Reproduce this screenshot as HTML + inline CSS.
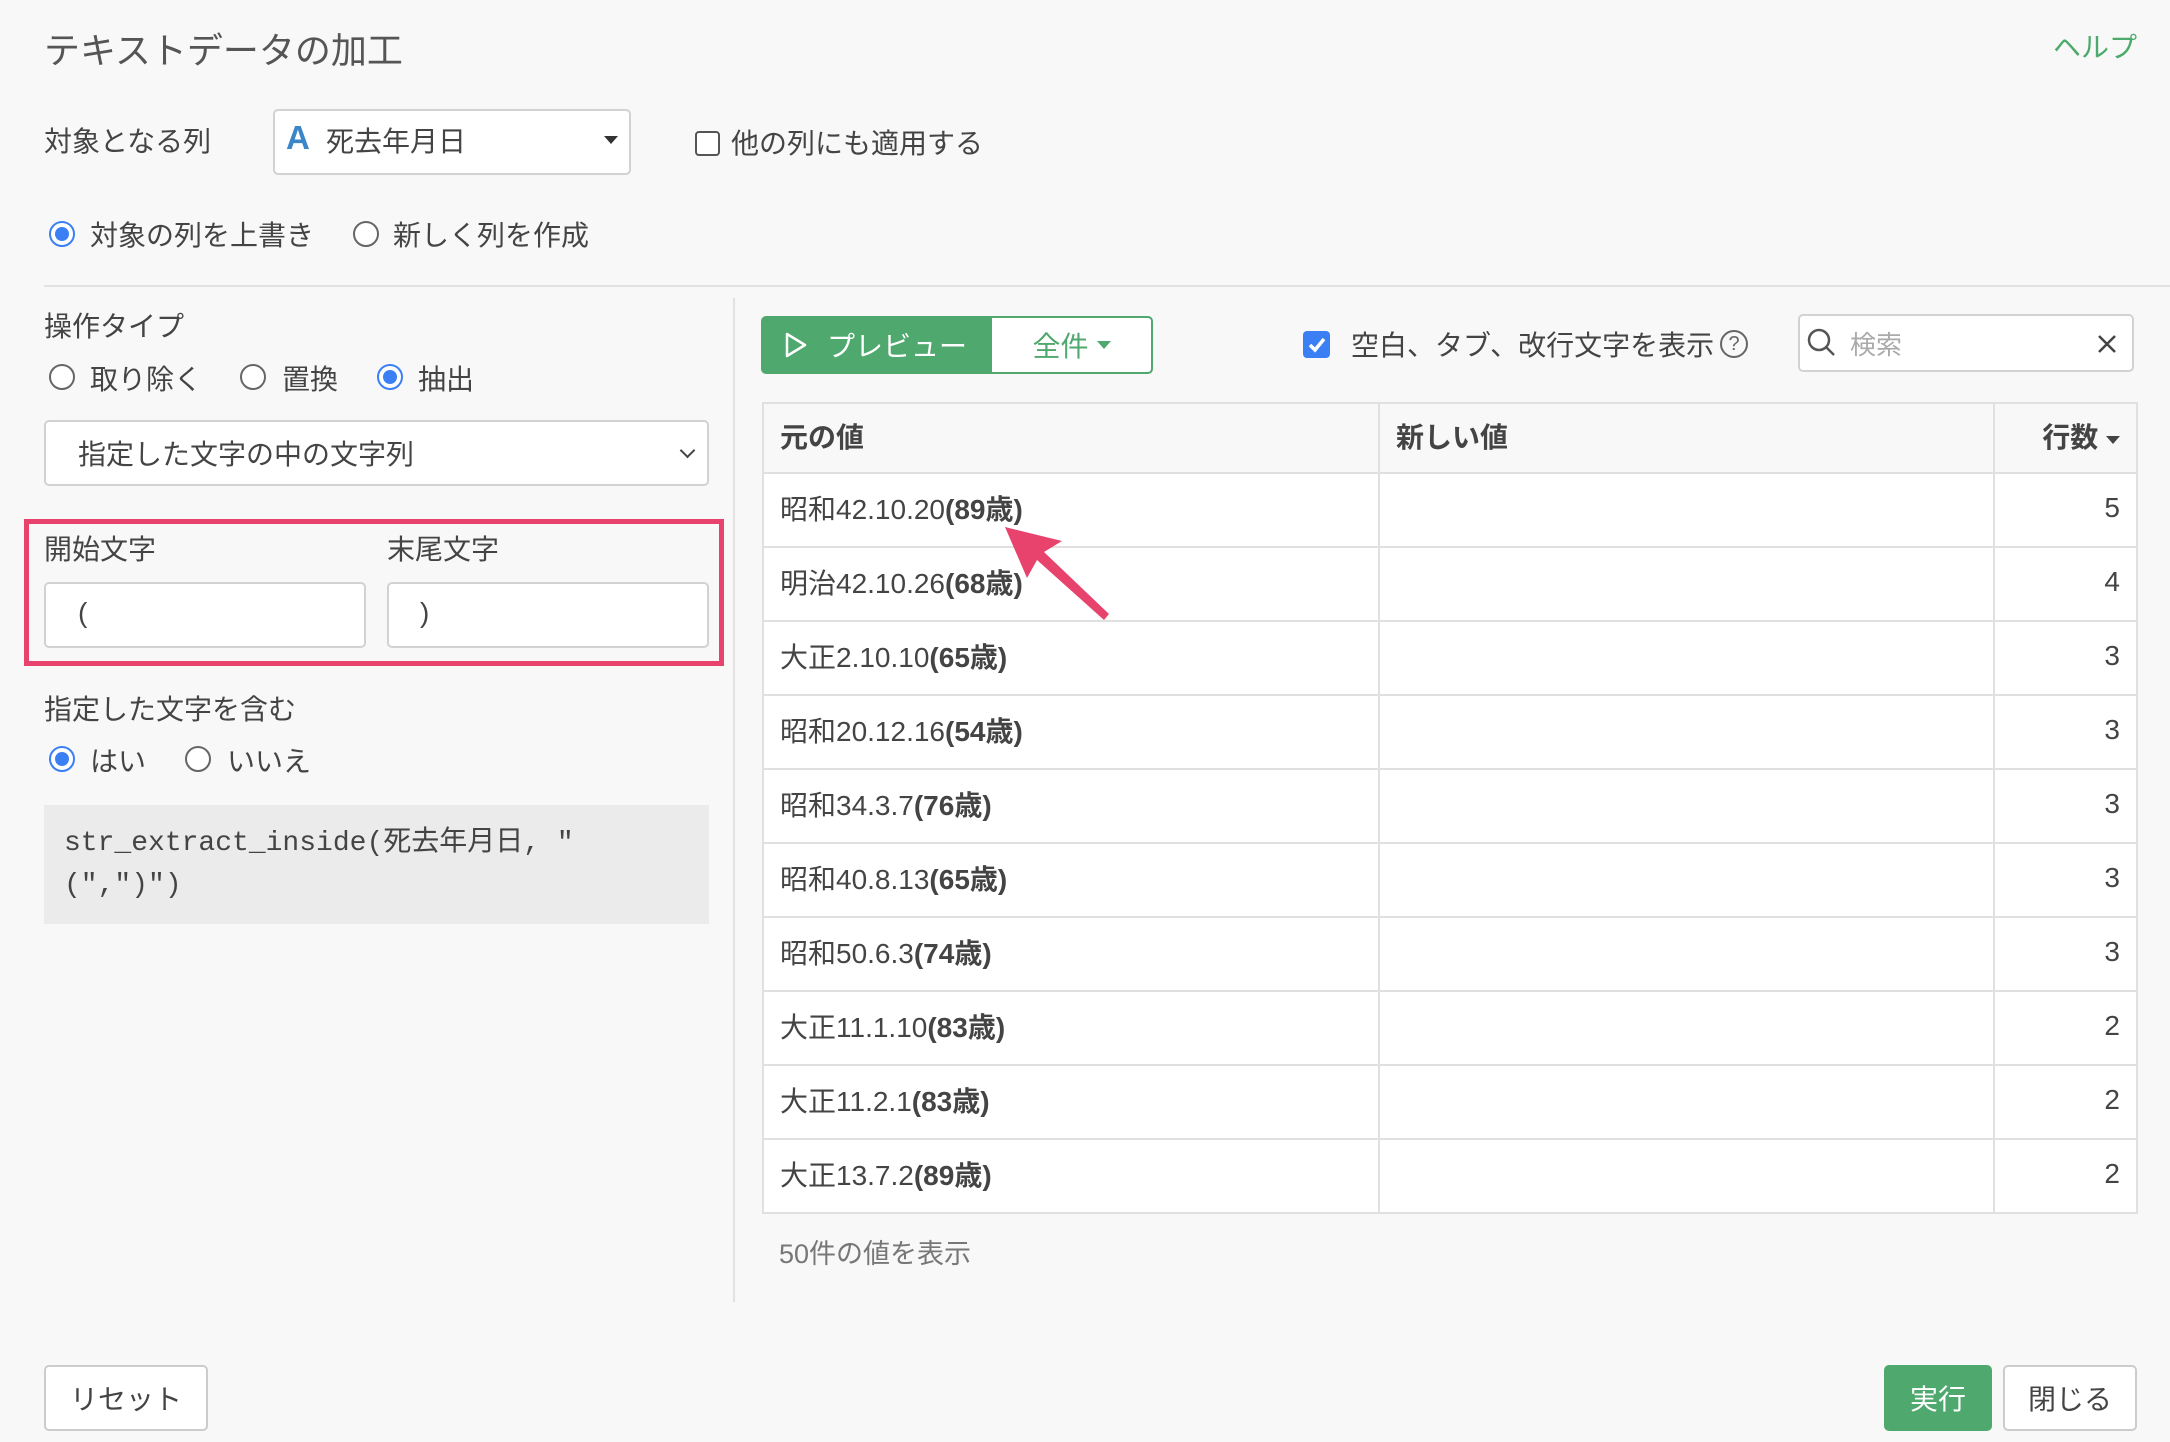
<!DOCTYPE html>
<html><head><meta charset="utf-8"><style>
*{box-sizing:border-box;margin:0;padding:0}
body{width:2170px;height:1442px;background:#f8f8f8;font-family:"Liberation Sans","Noto Sans CJK JP",sans-serif;color:#444;position:relative;overflow:hidden;font-size:28px}
.a{position:absolute;white-space:nowrap}
.radio{position:absolute;width:26px;height:26px;border:2px solid #666;border-radius:50%;background:#fff}
.radio.on{border:2px solid #3b7ff5}
.radio.on::after{content:"";position:absolute;left:4px;top:4px;width:14px;height:14px;border-radius:50%;background:#3b7ff5}
.box{position:absolute;background:#fff;border:2px solid #d2d2d2;border-radius:5px}
table{position:absolute;left:762px;top:402px;width:1376px;border-collapse:collapse;background:#fff}
td,th{border:2px solid #e0e0e0;height:74px;font-size:28px;padding:0 16px;text-align:left;color:#444;padding-bottom:4px}
th{background:#f8f8f8;height:70px}
td.n,th.n{text-align:right}
b{color:#444}
.btn{position:absolute;border-radius:5px;font-size:28px;display:flex;align-items:center;justify-content:center}
</style></head><body>
<div class="a" style="left:44px;top:22px;font-size:36px;color:#555">テキストデータの加工</div>
<div class="a" style="left:2053px;top:26px;font-size:28px;color:#4caa6c">ヘルプ</div>

<div class="a" style="left:44px;top:120px">対象となる列</div>
<div class="box" style="left:273px;top:109px;width:358px;height:66px"></div>
<div class="a" style="left:286px;top:119px;font-size:33px;color:#3b86c9;font-weight:bold">A</div>
<div class="a" style="left:326px;top:120px">死去年月日</div>
<div class="a" style="left:604px;top:136px;width:0;height:0;border-left:7px solid transparent;border-right:7px solid transparent;border-top:8px solid #333"></div>
<div class="a" style="left:695px;top:131px;width:25px;height:25px;border:2px solid #555;border-radius:4px;background:#fff"></div>
<div class="a" style="left:731px;top:122px">他の列にも適用する</div>

<div class="radio on" style="left:49px;top:221px"></div>
<div class="a" style="left:90px;top:214px">対象の列を上書き</div>
<div class="radio" style="left:353px;top:221px"></div>
<div class="a" style="left:393px;top:214px">新しく列を作成</div>
<div class="a" style="left:44px;top:285px;width:2126px;height:2px;background:#e2e2e2"></div>
<div class="a" style="left:733px;top:298px;width:2px;height:1004px;background:#e2e2e2"></div>

<div class="a" style="left:44px;top:305px">操作タイプ</div>
<div class="radio" style="left:49px;top:364px"></div>
<div class="a" style="left:90px;top:358px">取り除く</div>
<div class="radio" style="left:240px;top:364px"></div>
<div class="a" style="left:282px;top:358px">置換</div>
<div class="radio on" style="left:377px;top:364px"></div>
<div class="a" style="left:418px;top:358px">抽出</div>

<div class="box" style="left:44px;top:420px;width:665px;height:66px"></div>
<div class="a" style="left:78px;top:433px">指定した文字の中の文字列</div>
<div class="a" style="left:682px;top:445px;width:11px;height:11px;border-right:2px solid #444;border-bottom:2px solid #444;transform:rotate(45deg)"></div>

<div class="a" style="left:24px;top:519px;width:700px;height:147px;border:5px solid #e8436c"></div>
<div class="a" style="left:44px;top:528px">開始文字</div>
<div class="a" style="left:387px;top:528px">末尾文字</div>
<div class="box" style="left:44px;top:582px;width:322px;height:66px"></div>
<div class="box" style="left:387px;top:582px;width:322px;height:66px"></div>
<div class="a" style="left:78px;top:597px">(</div>
<div class="a" style="left:420px;top:597px">)</div>

<div class="a" style="left:44px;top:688px">指定した文字を含む</div>
<div class="radio on" style="left:49px;top:746px"></div>
<div class="a" style="left:90px;top:740px">はい</div>
<div class="radio" style="left:185px;top:746px"></div>
<div class="a" style="left:227px;top:740px">いいえ</div>

<div class="a" style="left:44px;top:805px;width:665px;height:119px;background:#ebebeb"></div>
<div class="a" style="left:64px;top:823px;font-family:'Liberation Mono','Noto Sans CJK JP',monospace;font-size:28px;line-height:42px;color:#444">str_extract_inside(死去年月日, "<br>(",")")</div>

<div class="btn" style="left:761px;top:316px;width:232px;height:58px;background:#4fa86e;color:#fff;border-radius:5px 0 0 5px;justify-content:flex-start;padding-left:24px">
<svg width="22" height="26" viewBox="0 0 22 26" style="margin-right:20px"><path d="M2 2 L20 13 L2 24 Z" fill="none" stroke="#fff" stroke-width="2.5" stroke-linejoin="round"/></svg>プレビュー</div>
<div class="btn" style="left:992px;top:316px;width:161px;height:58px;background:#fff;border:2px solid #4fa86e;border-left:none;border-radius:0 5px 5px 0;color:#4fa86e">全件<span style="display:inline-block;margin-left:8px;border-left:7px solid transparent;border-right:7px solid transparent;border-top:8px solid #4fa86e"></span></div>

<div class="a" style="left:1303px;top:331px;width:27px;height:27px;background:#3b7ff5;border-radius:4px"></div>
<svg class="a" style="left:1306px;top:334px" width="22" height="22" viewBox="0 0 22 22"><path d="M4 11 L9 16 L18 5" fill="none" stroke="#fff" stroke-width="3.5"/></svg>
<div class="a" style="left:1351px;top:324px">空白、タブ、改行文字を表示</div>
<div class="a" style="left:1720px;top:330px;width:28px;height:28px;border:2px solid #666;border-radius:50%;font-size:20px;text-align:center;line-height:24px;color:#666">?</div>

<div class="box" style="left:1798px;top:314px;width:336px;height:58px"></div>
<svg class="a" style="left:1806px;top:327px" width="32" height="32" viewBox="0 0 32 32"><circle cx="13" cy="13" r="10" fill="none" stroke="#555" stroke-width="2.5"/><path d="M20 20 L28 28" stroke="#555" stroke-width="2.5"/></svg>
<div class="a" style="left:1850px;top:325px;color:#aaa;font-size:26px">検索</div>
<svg class="a" style="left:2096px;top:333px" width="22" height="22" viewBox="0 0 22 22"><path d="M3 3 L19 19 M19 3 L3 19" stroke="#444" stroke-width="2.5"/></svg>

<table>
<tr><th style="width:616px">元の値</th><th style="width:615px">新しい値</th><th class="n">行数 <span style="display:inline-block;border-left:7px solid transparent;border-right:7px solid transparent;border-top:8px solid #444;vertical-align:middle"></span></th></tr>
<tr><td>昭和42.10.20<b>(89歳)</b></td><td></td><td class="n">5</td></tr>
<tr><td>明治42.10.26<b>(68歳)</b></td><td></td><td class="n">4</td></tr>
<tr><td>大正2.10.10<b>(65歳)</b></td><td></td><td class="n">3</td></tr>
<tr><td>昭和20.12.16<b>(54歳)</b></td><td></td><td class="n">3</td></tr>
<tr><td>昭和34.3.7<b>(76歳)</b></td><td></td><td class="n">3</td></tr>
<tr><td>昭和40.8.13<b>(65歳)</b></td><td></td><td class="n">3</td></tr>
<tr><td>昭和50.6.3<b>(74歳)</b></td><td></td><td class="n">3</td></tr>
<tr><td>大正11.1.10<b>(83歳)</b></td><td></td><td class="n">2</td></tr>
<tr><td>大正11.2.1<b>(83歳)</b></td><td></td><td class="n">2</td></tr>
<tr><td>大正13.7.2<b>(89歳)</b></td><td></td><td class="n">2</td></tr>
</table>

<svg class="a" style="left:0;top:0" width="2170" height="1442"><path d="M1005 527 L1062 541 L1044 552 L1109 614 L1104 620 L1037 560 L1027 578 Z" fill="#e8436c"/></svg>

<div class="a" style="left:779px;top:1232px;color:#777;font-size:27px">50件の値を表示</div>

<div class="btn" style="left:44px;top:1365px;width:164px;height:66px;background:#fff;border:2px solid #ccc;color:#444">リセット</div>
<div class="btn" style="left:1884px;top:1365px;width:108px;height:66px;background:#4fa86e;color:#fff">実行</div>
<div class="btn" style="left:2003px;top:1365px;width:134px;height:66px;background:#fff;border:2px solid #ccc;color:#444">閉じる</div>
</body></html>
